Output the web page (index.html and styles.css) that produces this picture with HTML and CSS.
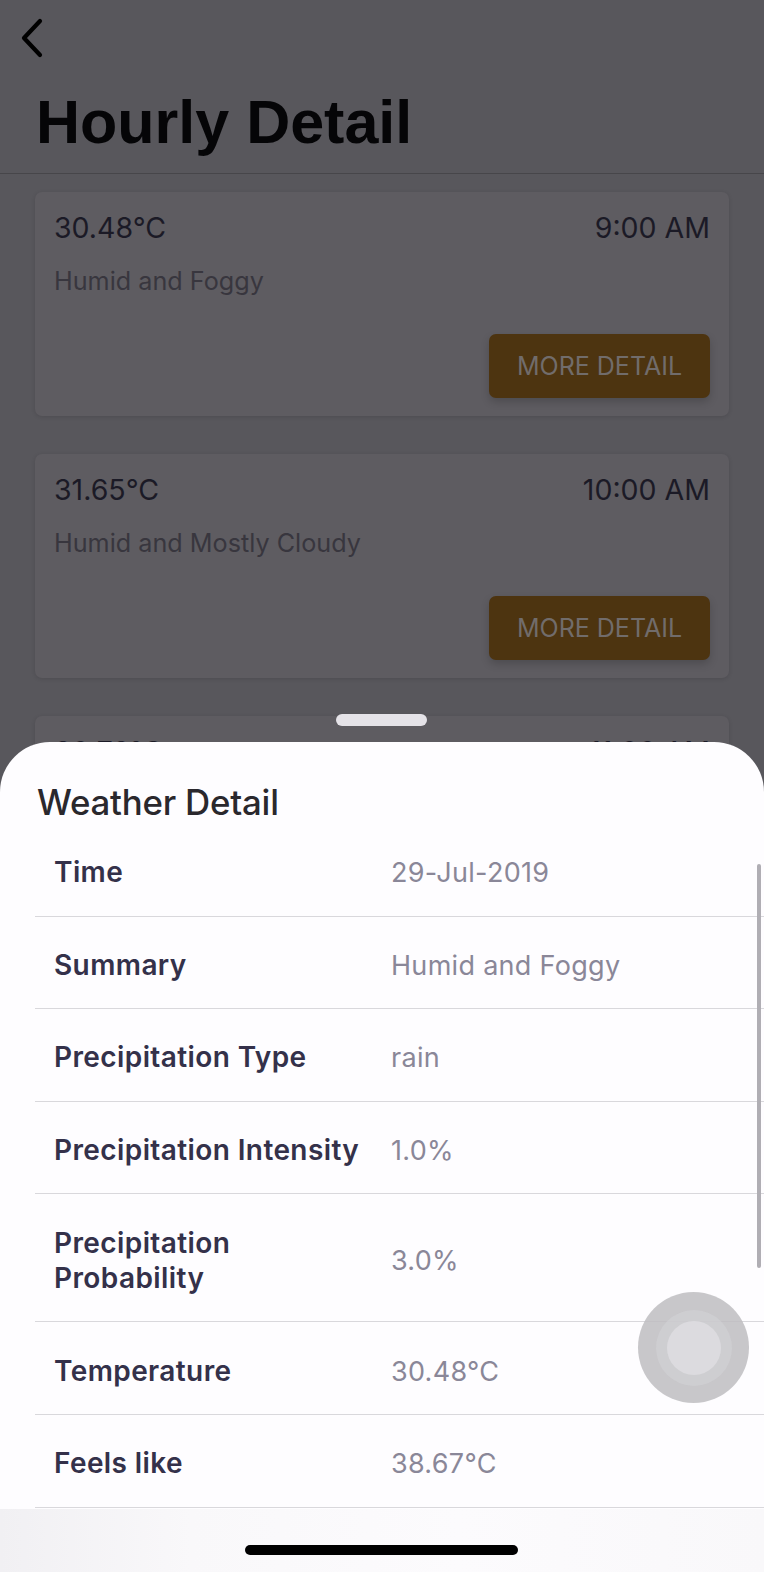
FILE: index.html
```html
<!DOCTYPE html>
<html>
<head>
<meta charset="utf-8">
<link rel="stylesheet" href="styles.css">
</head>
<body>
<div class="screen">
  <header class="header">
    <button class="back" aria-label="Back">
      <svg width="28" height="42" viewBox="0 0 28 42"><path d="M22 4 L6 21 L22 38" fill="none" stroke="#000" stroke-width="4.2" stroke-linecap="round" stroke-linejoin="round"/></svg>
    </button>
    <h1 class="title">Hourly Detail</h1>
  </header>
  <main class="list">
    <section class="card">
      <div class="card-top"><span class="temp">30.48°C</span><span class="time">9:00 AM</span></div>
      <div class="summary">Humid and Foggy</div>
      <div class="card-actions"><button class="more">MORE DETAIL</button></div>
    </section>
    <section class="card">
      <div class="card-top"><span class="temp">31.65°C</span><span class="time">10:00 AM</span></div>
      <div class="summary">Humid and Mostly Cloudy</div>
      <div class="card-actions"><button class="more">MORE DETAIL</button></div>
    </section>
    <section class="card">
      <div class="card-top"><span class="temp">30.73°C</span><span class="time">11:00 AM</span></div>
    </section>
  </main>

  <div class="grabber"></div>
  <div class="sheet">
    <h2 class="sheet-title">Weather Detail</h2>
    <div class="rows">
      <div class="row"><span class="label">Time</span><span class="value">29-Jul-2019</span></div>
      <div class="row"><span class="label">Summary</span><span class="value">Humid and Foggy</span></div>
      <div class="row"><span class="label">Precipitation Type</span><span class="value">rain</span></div>
      <div class="row"><span class="label">Precipitation Intensity</span><span class="value">1.0%</span></div>
      <div class="row tall"><span class="label">Precipitation<br>Probability</span><span class="value">3.0%</span></div>
      <div class="row"><span class="label">Temperature</span><span class="value">30.48°C</span></div>
      <div class="row"><span class="label">Feels like</span><span class="value">38.67°C</span></div>
    </div>
    <div class="scrollbar"></div>
    <div class="sheet-foot"></div>
  </div>
  <div class="assistive"><div class="ring"><div class="dot"></div></div></div>
  <div class="home-indicator"></div>
</div>
</body>
</html>
```
FILE: styles.css
```css
* { box-sizing: border-box; }
html, body { margin: 0; padding: 0; }
body {
  width: 764px;
  height: 1572px;
  overflow: hidden;
  font-family: Inter, "Liberation Sans", sans-serif;
  background: #58575c;
}
.screen {
  position: relative;
  width: 764px;
  height: 1572px;
  overflow: hidden;
  background: #58575c;
}
.header {
  border-bottom: 1px solid #47464a;
  height: 174px;
  padding: 17px 0 0 0;
}
.back {
  display: block;
  margin-left: 18px;
  padding: 0;
  border: 0;
  background: none;
  width: 28px;
  height: 42px;
}
.title {
  margin: 28px 0 0 36px;
  font-family: "Liberation Sans", Arial, sans-serif;
  font-weight: 700;
  font-size: 61px;
  line-height: 70px;
  letter-spacing: 0;
  color: #050507;
}
.list {
  display: flex;
  flex-direction: column;
  gap: 38px;
  padding: 18px 35px 0 35px;
}
.card {
  background: #5e5c61;
  border-radius: 7px;
  height: 224px;
  padding: 19px 19px 0 19px;
  box-shadow: 0 1px 4px rgba(0,0,0,0.12);
}
.card-top {
  display: flex;
  justify-content: space-between;
  font-size: 28.5px;
  line-height: 34px;
  color: #1b1a26;
  font-weight: 400;
}
.summary {
  margin-top: 21px;
  font-size: 25.2px;
  line-height: 30px;
  color: #38363e;
}
.card-actions {
  display: flex;
  justify-content: flex-end;
  margin-top: 38px;
}
.more {
  width: 221px;
  height: 64px;
  border: 0;
  border-radius: 7px;
  background: #4d3410;
  color: #716c6b;
  font-family: Inter, "Liberation Sans", sans-serif;
  font-size: 25px;
  letter-spacing: 0;
  box-shadow: 0 4px 8px rgba(0,0,0,0.18);
}
.grabber {
  position: absolute;
  left: 336px;
  top: 714px;
  width: 91px;
  height: 12px;
  border-radius: 6px;
  background: #e5e3e8;
}
.sheet {
  position: absolute;
  left: 0;
  top: 742px;
  width: 764px;
  height: 830px;
  background: #fefdff;
  border-radius: 50px 50px 0 0;
  overflow: hidden;
}
.sheet-title {
  margin: 41px 0 0 37px;
  font-size: 34.8px;
  line-height: 38px;
  font-weight: 500;
  color: #2a282d;
  letter-spacing: -0.2px;
}
.rows {
  margin: 3px 0 0 35px;
}
.row {
  display: grid;
  grid-template-columns: 337px 1fr;
  align-items: center;
  height: 92.6px;
  padding: 6px 0 0 19px;
  border-bottom: 1px solid #d9d8dc;
}
.row.tall { height: 128px; }
.label {
  font-size: 28px;
  line-height: 35px;
  font-weight: 600;
  letter-spacing: 0.4px;
  color: #34314a;
}
.value {
  font-size: 27px;
  line-height: 35px;
  letter-spacing: 0.3px;
  color: #8a8798;
}
.scrollbar {
  position: absolute;
  left: 757px;
  top: 122px;
  width: 4px;
  height: 404px;
  border-radius: 2px;
  background: #b0aeb4;
}
.sheet-foot {
  position: absolute;
  left: 0;
  right: 0;
  bottom: 0;
  height: 63px;
  background: linear-gradient(90deg, #f1f0f3 0%, #f9f8fa 25%, #fcfbfd 60%, #f9f8fa 100%);
}
.assistive {
  position: absolute;
  left: 638px;
  top: 1292px;
  width: 111px;
  height: 111px;
  border-radius: 50%;
  background: rgba(190,189,193,0.85);
  display: flex;
  align-items: center;
  justify-content: center;
}
.ring {
  width: 76px;
  height: 76px;
  border-radius: 50%;
  background: rgba(212,211,215,0.55);
  display: flex;
  align-items: center;
  justify-content: center;
}
.dot {
  width: 54px;
  height: 54px;
  border-radius: 50%;
  background: #dcdbdf;
}
.home-indicator {
  position: absolute;
  left: 245px;
  top: 1545px;
  width: 273px;
  height: 10px;
  border-radius: 5px;
  background: #000;
}
```
